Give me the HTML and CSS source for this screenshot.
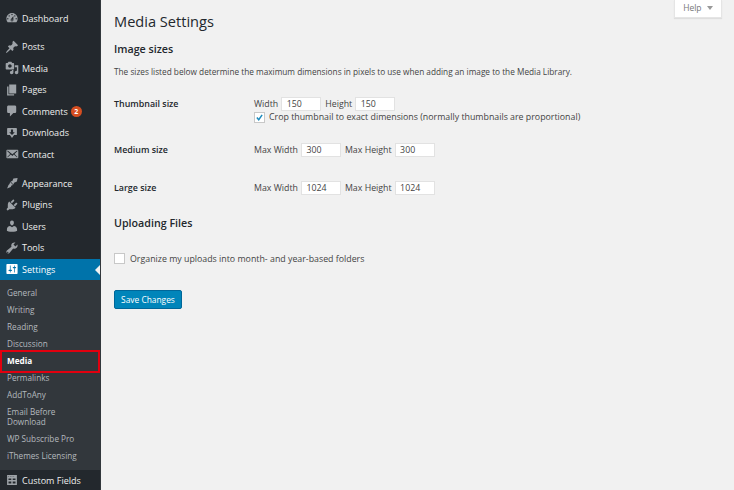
FILE: index.html
```html
<!DOCTYPE html>
<html lang="en">
<head>
    <meta charset="UTF-8">
    <title>Media Settings</title>
    <link rel="stylesheet" href="styles.css">
</head>
<body>
    <div class="layout">
        <nav class="sidebar">
            <ul class="menu first">
                <li><svg class="icon" viewBox="0 0 20 20"><path d="M3.76 16h12.48c1.1-1.37 1.76-3.11 1.76-5 0-4.42-3.58-8-8-8s-8 3.58-8 8c0 1.89.66 3.63 1.76 5zM10 4c.55 0 1 .45 1 1s-.45 1-1 1-1-.45-1-1 .45-1 1-1zM6 6c.55 0 1 .45 1 1s-.45 1-1 1-1-.45-1-1 .45-1 1-1zm8 0c.55 0 1 .45 1 1s-.45 1-1 1-1-.45-1-1 .45-1 1-1zm-5.37 5.55L12 7v6c0 1.1-.9 2-2 2s-2-.9-2-2c0-.57.24-1.08.63-1.45zM4 10c.55 0 1 .45 1 1s-.45 1-1 1-1-.45-1-1 .45-1 1-1zm12 0c.55 0 1 .45 1 1s-.45 1-1 1-1-.45-1-1 .45-1 1-1zm-5 3c0-.55-.45-1-1-1s-1 .45-1 1 .45 1 1 1 1-.45 1-1z"/></svg>Dashboard</li>
            </ul>
            <ul class="menu">
                <li><svg class="icon" viewBox="0 0 20 20"><path d="M10.44 3.02l1.82-1.82 6.36 6.35-1.83 1.82c-1.05-.68-2.48-.57-3.41.36l-.75.75c-.92.93-1.04 2.35-.35 3.4l-1.83 1.82-2.41-2.41-2.8 2.79c-.42.42-3.38 2.71-3.8 2.29s1.86-3.39 2.28-3.81l2.79-2.79L4.1 9.36l1.83-1.82c1.05.69 2.48.57 3.4-.36l.75-.75c.93-.92 1.05-2.35.36-3.41z"/></svg>Posts</li>
                <li><svg class="icon" viewBox="0 0 20 20"><path d="M13 11V4c0-.55-.45-1-1-1h-1.67L9 1H5L3.67 3H2c-.55 0-1 .45-1 1v7c0 .55.45 1 1 1h10c.55 0 1-.45 1-1zM7 4.5c1.38 0 2.5 1.12 2.5 2.5S8.38 9.5 7 9.5 4.5 8.38 4.5 7 5.62 4.5 7 4.5zM14 6h5v10.5c0 1.38-1.12 2.5-2.5 2.5S14 17.88 14 16.5s1.12-2.5 2.5-2.5c.17 0 .34.02.5.05V9h-3V6zm-4 8.05V13h2v3.5c0 1.38-1.12 2.5-2.5 2.5S7 17.88 7 16.5 8.12 14 9.5 14c.17 0 .34.02.5.05z"/></svg>Media</li>
                <li><svg class="icon" viewBox="0 0 20 20"><path d="M6 15V2h10v13H6zm-1 1h8v2H3V5h2v11z"/></svg>Pages</li>
                <li><svg class="icon" viewBox="0 0 20 20"><path d="M5 2h9c1.1 0 2 .9 2 2v7c0 1.1-.9 2-2 2h-2l-5 5v-5H5c-1.1 0-2-.9-2-2V4c0-1.1.9-2 2-2z"/></svg>Comments<span class="badge">2</span></li>
                <li><svg class="icon" viewBox="0 0 20 20"><path fill-rule="evenodd" d="M4 3h12c.55 0 1 .45 1 1v8c0 .55-.45 1-1 1h-3l-3 4-3-4H4c-.55 0-1-.45-1-1V4c0-.55.45-1 1-1zm4.5 2v4H6l4 4 4-4h-2.5V5z"/></svg>Downloads</li>
                <li><svg class="icon" viewBox="0 0 20 20"><path d="M19 14.5v-9c0-.83-.67-1.5-1.5-1.5H3.49c-.83 0-1.5.67-1.5 1.5v9c0 .83.67 1.5 1.5 1.5H17.5c.83 0 1.5-.67 1.5-1.5zm-1.31-9.11c.33.33.15.67-.03.84L13.6 9.95l3.9 4.06c.12.14.2.36.06.51-.13.16-.43.15-.56.05l-4.37-3.73-2.14 1.95-2.13-1.95-4.37 3.73c-.13.1-.43.11-.56-.05-.14-.15-.06-.37.06-.51l3.9-4.06-4.06-3.72c-.18-.17-.36-.51-.03-.84s.67-.17.95.07l6.24 5.04 6.25-5.04c.28-.24.62-.4.95-.07z"/></svg>Contact</li>
            </ul>
            <ul class="menu">
                <li><svg class="icon" viewBox="0 0 20 20"><path d="M18 3l-1 5-4 1.5-1 2.5-4-4 2.5-1L12 3.5zM7.3 8.5l4.2 4.2-2.3 1-1 2L3 18l2-5 1.5-1.5z"/></svg>Appearance</li>
                <li><svg class="icon" viewBox="0 0 20 20"><path d="M13.11 4.36L9.87 7.6 8 5.73l3.24-3.24c.35-.34 1.05-.2 1.56.32.52.51.66 1.21.31 1.55zm-8 1.77l.91-1.12 9.01 9.01-1.19.84c-.71.71-2.63 1.16-3.82 1.16H6.14L4.9 17.26c-.59.59-1.54.59-2.12 0-.59-.58-.59-1.53 0-2.12l1.24-1.24v-3.88c0-1.13.4-3.18 1.09-3.89zm7.26 3.97l3.24-3.24c.34-.35 1.04-.21 1.55.31.52.51.66 1.21.31 1.55l-3.24 3.25z"/></svg>Plugins</li>
                <li><svg class="icon" viewBox="0 0 20 20"><path d="M10 9.25c-2.27 0-2.73-3.44-2.73-3.44C7 4.02 7.82 2 9.97 2c2.16 0 2.98 2.02 2.71 3.81 0 0-.41 3.44-2.68 3.44zm0 2.57L12.72 10c2.39 0 4.52 2.33 4.52 4.53v2.49s-3.65 1.13-7.24 1.13c-3.65 0-7.24-1.13-7.24-1.13v-2.49c0-2.25 1.94-4.48 4.47-4.48z"/></svg>Users</li>
                <li><svg class="icon" viewBox="0 0 20 20"><path d="M16.68 9.77c-1.34 1.34-3.3 1.67-4.95.99l-5.41 6.52c-.99.99-2.59.99-3.57 0-.99-.98-.99-2.58 0-3.57l6.52-5.42c-.68-1.65-.35-3.61.99-4.95 1.28-1.28 3.12-1.62 4.72-1.06l-2.89 2.89 2.82 2.82 2.86-2.87c.53 1.58.18 3.4-1.09 4.67zM4.66 15.66c-.39-.39-1.03-.39-1.42 0-.39.39-.39 1.03 0 1.42.39.39 1.03.39 1.42 0 .39-.39.39-1.03 0-1.42z"/></svg>Tools</li>
                <li class="current"><svg class="icon" viewBox="0 0 20 20"><path d="M18 16V4c0-.55-.45-1-1-1H3c-.55 0-1 .45-1 1v12c0 .55.45 1 1 1h14c.55 0 1-.45 1-1zM8 11h1c.55 0 1 .45 1 1s-.45 1-1 1H8v1.5c0 .28-.22.5-.5.5s-.5-.22-.5-.5V13H6c-.55 0-1-.45-1-1s.45-1 1-1h1V5.5c0-.28.22-.5.5-.5s.5.22.5.5V11zm5-2h-1c-.55 0-1-.45-1-1s.45-1 1-1h1V5.5c0-.28.22-.5.5-.5s.5.22.5.5V7h1c.55 0 1 .45 1 1s-.45 1-1 1h-1v5.5c0 .28-.22.5-.5.5s-.5-.22-.5-.5V9z"/></svg>Settings</li>
            </ul>
            <ul class="submenu">
                <li>General</li>
                <li>Writing</li>
                <li>Reading</li>
                <li>Discussion</li>
                <li class="active">Media</li>
                <li>Permalinks</li>
                <li>AddToAny</li>
                <li>Email Before Download</li>
                <li>WP Subscribe Pro</li>
                <li>iThemes Licensing</li>
            </ul>
            <ul class="menu last">
                <li><svg class="icon" viewBox="0 0 20 20"><path fill-rule="evenodd" d="M3 3h14v14H3zm1.5 1.5v1h1v-1zm2.5 0v1h1v-1zm2.5 0v1h1v-1zm2.5 0v1h1v-1zM5 8v2h4V8zm6 0v2h4V8zm-6 4v3h4v-3zm6 0v3h4v-3z"/></svg>Custom Fields</li>
            </ul>
        </nav>

        <main class="content">
            <div class="help">Help <span class="arrow"></span></div>
            <h1>Media Settings</h1>
            <form>
                <h3>Image sizes</h3>
                <p class="intro">The sizes listed below determine the maximum dimensions in pixels to use when adding an image to the Media Library.</p>

                <div class="row thumb-row">
                    <div class="label">Thumbnail size</div>
                    <div class="fields">
                        <div class="line">
                            <span>Width</span><span class="input">150</span>
                            <span>Height</span><span class="input">150</span>
                        </div>
                        <div class="check-line crop">
                            <span class="checkbox"><svg viewBox="0 0 12 12"><path d="M2.5 6l2.5 3 4.5-6.5"/></svg></span>
                            Crop thumbnail to exact dimensions (normally thumbnails are proportional)
                        </div>
                    </div>
                </div>
                <div class="row medium-row">
                    <div class="label">Medium size</div>
                    <div class="fields">
                        <div class="line">
                            <span>Max Width</span><span class="input">300</span>
                            <span>Max Height</span><span class="input">300</span>
                        </div>
                    </div>
                </div>
                <div class="row large-row">
                    <div class="label">Large size</div>
                    <div class="fields">
                        <div class="line">
                            <span>Max Width</span><span class="input">1024</span>
                            <span>Max Height</span><span class="input">1024</span>
                        </div>
                    </div>
                </div>

                <h3 class="upload-title">Uploading Files</h3>
                <div class="check-line organize">
                    <span class="checkbox"></span>
                    Organize my uploads into month- and year-based folders
                </div>
                <button type="button" class="save">Save Changes</button>
            </form>
        </main>
    </div>
</body>
</html>
```

FILE: styles.css
```css
* {
    box-sizing: border-box;
}
html, body {
    margin: 0;
    height: 490px;
    overflow: hidden;
}
body {
    font-family: "Open Sans", sans-serif;
    font-size: 9px;
    color: #444;
    background-color: #f1f1f1;
}
.layout {
    display: flex;
    height: 490px;
}
ul {
    list-style: none;
    margin: 0;
    padding: 0;
}

/* sidebar */
.sidebar {
    width: 101px;
    flex: none;
    background-color: #23282d;
    border-right: 1px solid #32373c;
    color: #eee;
    display: flex;
    flex-direction: column;
    padding-top: 7.5px;
}
.menu {
    margin-bottom: 7.5px;
}
.menu.first {
    margin-bottom: 7px;
}
.menu li {
    position: relative;
    display: flex;
    align-items: center;
    height: 21.5px;
    padding-left: 5px;
    white-space: nowrap;
}
.icon {
    width: 14px;
    height: 14px;
    margin-right: 3px;
    fill: #9ea3a8;
    flex: none;
}
.badge {
    width: 11px;
    height: 11px;
    margin-left: 3px;
    border-radius: 50%;
    background-color: #d54e21;
    color: #fff;
    font-size: 7px;
    font-weight: 700;
    line-height: 11px;
    text-align: center;
}
.menu .current {
    background-color: #0073aa;
    color: #fff;
}
.current .icon {
    fill: #fff;
}
.current::after {
    content: "";
    position: absolute;
    right: 0;
    top: 6px;
    border: 5px solid transparent;
    border-right-color: #f1f1f1;
    border-left-width: 0;
}
.submenu {
    margin-top: -7.5px;
    background-color: #32373c;
    padding: 4.5px 0 5px;
    color: #b4b9be;
    font-size: 8.2px;
}
.submenu li {
    padding: 3.5px 7px;
    line-height: 10px;
}
.submenu .active {
    position: relative;
    color: #fff;
    font-weight: 700;
}
.submenu .active::after {
    content: "";
    position: absolute;
    top: -2.5px;
    bottom: -3px;
    left: 0;
    right: 0;
    border: 2px solid #e2000f;
}
.menu.last {
    margin-bottom: 0;
}

/* main */
.content {
    position: relative;
    flex: 1;
    padding-left: 13px;
}
.help {
    position: absolute;
    top: 0;
    right: 12px;
    width: 48px;
    height: 18px;
    background-color: #fff;
    box-shadow: 0 1px 1px rgba(0, 0, 0, 0.08);
    border: 1px solid #e5e5e5;
    border-top: 0;
    color: #777;
    font-size: 8.5px;
    line-height: 16px;
    text-align: center;
}
.arrow {
    display: inline-block;
    margin-left: 3px;
    vertical-align: 1px;
    border: 3px solid transparent;
    border-top: 4px solid #999;
    border-bottom: 0;
}
h1 {
    margin: 0;
    padding-top: 9px;
    font-size: 14.6px;
    font-weight: 400;
    line-height: 24px;
    color: #23282d;
}
h3 {
    margin: 0;
    padding-top: 8px;
    font-size: 10.7px;
    font-weight: 600;
    line-height: 16px;
    color: #23282d;
}
.intro {
    margin: 9px 0 0;
    font-size: 8.25px;
    line-height: 12px;
}
.row {
    display: flex;
}
.label {
    width: 140px;
    flex: none;
    font-weight: 600;
    color: #23282d;
    line-height: 14px;
    font-size: 8.9px;
}
.thumb-row {
    margin-top: 19px;
}
.medium-row {
    margin-top: 21px;
}
.large-row {
    margin-top: 24px;
}
.line {
    display: flex;
    align-items: center;
    gap: 3px;
    height: 14px;
    font-size: 8.8px;
}
.input {
    width: 40px;
    height: 14px;
    padding-left: 4.5px;
    margin-right: 1px;
    background-color: #fff;
    border: 1px solid #e2e2e2;
    line-height: 12px;
}
.check-line {
    display: flex;
    align-items: center;
    height: 10px;
    font-size: 8.82px;
}
.crop {
    gap: 4px;
    margin-top: 1px;
}
.checkbox {
    width: 11px;
    height: 11px;
    background-color: #fff;
    border: 1px solid #c8c8c8;
    flex: none;
}
.checkbox svg {
    display: block;
    width: 9px;
    height: 9px;
    fill: none;
    stroke: #1e8cbe;
    stroke-width: 2;
}
.upload-title {
    margin-top: 12px;
}
.organize {
    gap: 5px;
    height: 11px;
    margin-top: 22px;
}
.save {
    display: block;
    margin-top: 26px;
    width: 68px;
    height: 19px;
    padding: 0;
    background-color: #0085ba;
    border: 1px solid #006799;
    border-radius: 2px;
    color: #fff;
    font-family: inherit;
    font-size: 8.4px;
}
```
